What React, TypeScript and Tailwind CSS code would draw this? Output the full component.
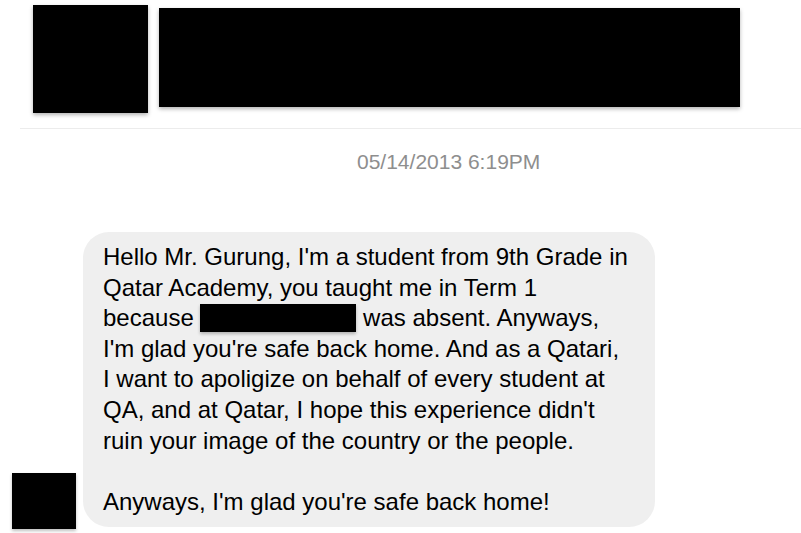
import React from 'react';

const lines: React.ReactNode[] = [
  "Hello Mr. Gurung, I'm a student from 9th Grade in",
  'Qatar Academy, you taught me in Term 1',
  <>
    because{' '}
    <span className="inline-block align-middle w-[156px] h-[28px] bg-black shadow-[0_2px_3px_rgba(0,0,0,0.25)] -mt-[4px]" />{' '}
    was absent. Anyways,
  </>,
  "I'm glad you're safe back home. And as a Qatari,",
  'I want to apoligize on behalf of every student at',
  "QA, and at Qatar, I hope this experience didn't",
  'ruin your image of the country or the people.',
  '\u00a0',
  "Anyways, I'm glad you're safe back home!",
];

const App: React.FC = () => {
  return (
    <div className="w-[801px] h-[533px] bg-white overflow-hidden font-['Liberation_Sans',Arial,sans-serif]">
      {/* header: redacted avatar + name */}
      <div className="flex items-start pt-[5px] pl-[33px] gap-[11px] h-[128px]">
        <div className="w-[115px] h-[108px] bg-black shadow-[0_2px_4px_rgba(0,0,0,0.3)]" />
        <div className="mt-[3px] w-[581px] h-[99px] bg-black shadow-[0_2px_4px_rgba(0,0,0,0.3)]" />
      </div>
      <div className="ml-[20px] border-t border-[#ececec]" />

      <div className="pt-[21px] pl-[357px] text-[21px] leading-[24px] text-[#8e8e8e]">05/14/2013 6:19PM</div>

      <div className="flex items-end mt-[58px] pl-[12px] gap-[7px]">
        <div className="w-[64px] h-[56px] bg-black shadow-[0_2px_3px_rgba(0,0,0,0.25)] -mb-[2px]" />
        <div className="w-[572px] rounded-[26px] bg-[#efefef] pl-[20px] pr-[10px] py-[10px] text-[24px] leading-[30.6px] text-black">
          {lines.map((l, i) => (
            <div key={i} className="whitespace-nowrap">{l}</div>
          ))}
        </div>
      </div>
    </div>
  );
};

export default App;
